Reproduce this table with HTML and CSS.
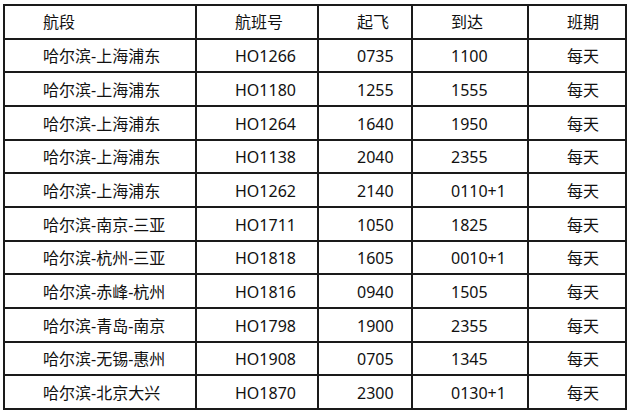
FILE: index.html
```html
<!DOCTYPE html>
<html lang="zh-CN">
<head>
<meta charset="utf-8">
<title>航班时刻表</title>
<link rel="stylesheet" href="styles.css">
</head>
<body>
<table class="schedule">
  <colgroup>
    <col class="c-route">
    <col class="c-flight">
    <col class="c-dep">
    <col class="c-arr">
    <col class="c-freq">
  </colgroup>
  <thead>
    <tr><th>航段</th><th>航班号</th><th>起飞</th><th>到达</th><th>班期</th></tr>
  </thead>
  <tbody>
    <tr><td>哈尔滨-上海浦东</td><td>HO1266</td><td>0735</td><td>1100</td><td>每天</td></tr>
    <tr><td>哈尔滨-上海浦东</td><td>HO1180</td><td>1255</td><td>1555</td><td>每天</td></tr>
    <tr><td>哈尔滨-上海浦东</td><td>HO1264</td><td>1640</td><td>1950</td><td>每天</td></tr>
    <tr><td>哈尔滨-上海浦东</td><td>HO1138</td><td>2040</td><td>2355</td><td>每天</td></tr>
    <tr><td>哈尔滨-上海浦东</td><td>HO1262</td><td>2140</td><td>0110+1</td><td>每天</td></tr>
    <tr><td>哈尔滨-南京-三亚</td><td>HO1711</td><td>1050</td><td>1825</td><td>每天</td></tr>
    <tr><td>哈尔滨-杭州-三亚</td><td>HO1818</td><td>1605</td><td>0010+1</td><td>每天</td></tr>
    <tr><td>哈尔滨-赤峰-杭州</td><td>HO1816</td><td>0940</td><td>1505</td><td>每天</td></tr>
    <tr><td>哈尔滨-青岛-南京</td><td>HO1798</td><td>1900</td><td>2355</td><td>每天</td></tr>
    <tr><td>哈尔滨-无锡-惠州</td><td>HO1908</td><td>0705</td><td>1345</td><td>每天</td></tr>
    <tr><td>哈尔滨-北京大兴</td><td>HO1870</td><td>2300</td><td>0130+1</td><td>每天</td></tr>
  </tbody>
</table>
</body>
</html>
```
FILE: styles.css
```css
html, body {
  margin: 0;
  padding: 0;
  background: #ffffff;
}

body {
  padding: 4px 0 0 3px;
  font-family: "Noto Sans", "Open Sans", "Noto Sans CJK SC", sans-serif;
  font-size: 16px;
  color: #111111;
}

.schedule {
  border-collapse: collapse;
  table-layout: fixed;
  width: 624px;
}

.c-route { width: 192px; }
.c-flight { width: 122px; }
.c-dep { width: 94px; }
.c-arr { width: 116px; }
.c-freq { width: 98px; }

.schedule th,
.schedule td {
  border: 2px solid #1a1a1a;
  height: 33.67px;
  padding: 0 0 0 38px;
  box-sizing: border-box;
  text-align: left;
  font-weight: normal;
  white-space: nowrap;
  line-height: 20px;
  vertical-align: middle;
}

.schedule tbody td {
  padding-top: 2px;
}
```
